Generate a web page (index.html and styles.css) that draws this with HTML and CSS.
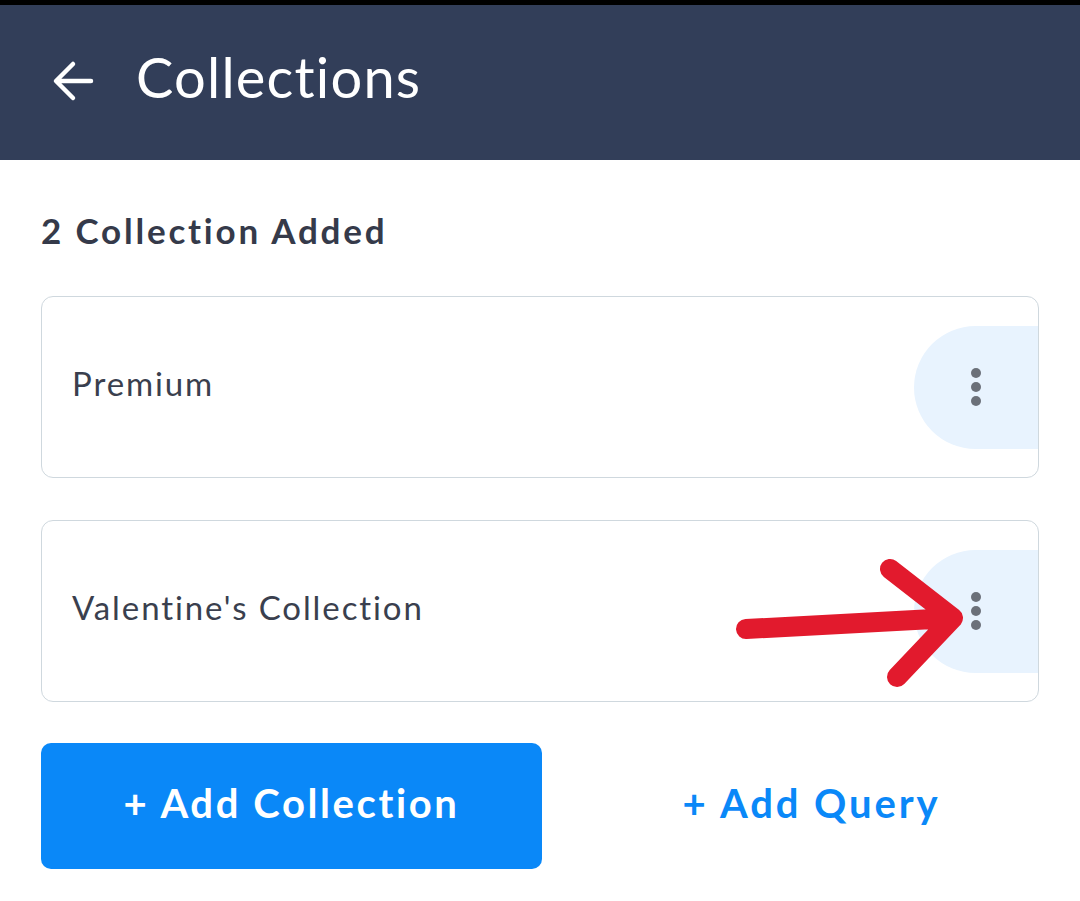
FILE: index.html
```html
<!DOCTYPE html>
<html lang="en">
<head>
    <meta charset="UTF-8">
    <meta name="viewport" content="width=device-width, initial-scale=1.0">
    <link rel="stylesheet" href="styles.css">
</head>
<body>

    <div class="topbar">
        <button class="back" aria-label="Back">
            <svg width="44" height="44" viewBox="0 0 44 44">
                <path d="M40 22H6M22 5L5 22l17 17" fill="none" stroke="#fff" stroke-width="4.5" stroke-linecap="round" stroke-linejoin="round"/>
            </svg>
        </button>
        <h1>Collections</h1>
    </div>

    <div class="content">
        <h2>2 Collection Added</h2>

        <div class="card">
            <span class="name">Premium</span>
            <button class="more" aria-label="More">
                <span></span><span></span><span></span>
            </button>
        </div>

        <div class="card">
            <span class="name">Valentine's Collection</span>
            <button class="more" aria-label="More">
                <span></span><span></span><span></span>
            </button>
        </div>

        <div class="actions">
            <button class="add-collection">+ Add Collection</button>
            <button class="add-query">+ Add Query</button>
        </div>
    </div>

    <!-- annotation arrow drawn over the screenshot -->
    <svg class="marker" width="1080" height="901" viewBox="0 0 1080 901">
        <path d="M746 624L952 613M890 564L953 613L897 672" fill="none" stroke="#e21a2d" stroke-width="20" stroke-linecap="round" stroke-linejoin="round"/>
    </svg>

</body>
</html>
```

FILE: styles.css
```css
body {
    margin: 0;
    padding: 0;
    font-family: Lato, "Open Sans", sans-serif;
    background-color: #fff;
    color: #353a4a;
    position: relative;
    min-height: 901px;
    border-top: 5px solid #000;
    box-sizing: border-box;
}
button {
    font-family: inherit;
    border: none;
    background: none;
    padding: 0;
    cursor: pointer;
}
.topbar {
    height: 155px;
    background-color: #323e59;
    display: flex;
    align-items: center;
    padding-left: 51px;
}
.back {
    width: 44px;
    height: 44px;
    display: flex;
    margin-top: -4px;
}
.topbar h1 {
    margin: -12px 0 0 41px;
    font-size: 56px;
    font-weight: 400;
    color: #fff;
    letter-spacing: 1.2px;
}
.content {
    padding: 0 41px;
}
.content h2 {
    margin: 0;
    padding: 48px 0 44px;
    font-size: 35px;
    font-weight: 700;
    line-height: 44px;
    letter-spacing: 2.8px;
    color: #353a4a;
}
.card {
    height: 180px;
    border: 1px solid #cfd8de;
    border-radius: 12px;
    display: flex;
    align-items: center;
    justify-content: space-between;
    margin-bottom: 42px;
    overflow: hidden;
}
.card + .card {
    margin-bottom: 41px;
}
.card .name {
    padding-left: 30px;
    margin-top: -9px;
    font-size: 33px;
    letter-spacing: 1.9px;
    color: #3a3f4e;
}
.more {
    width: 124px;
    height: 123px;
    background-color: #e8f3fe;
    border-radius: 62px 0 0 62px;
    display: flex;
    flex-direction: column;
    align-items: center;
    justify-content: center;
    gap: 4px;
}
.more span {
    width: 10px;
    height: 10px;
    border-radius: 50%;
    background-color: #6b7079;
}
.actions {
    display: flex;
    gap: 42px;
}
.add-collection {
    width: 501px;
    height: 126px;
    padding-bottom: 6px;
    background-color: #0a88f8;
    border-radius: 10px;
    color: #fff;
    font-size: 40px;
    font-weight: 700;
    letter-spacing: 2.6px;
}
.add-query {
    flex: 1;
    height: 126px;
    padding-bottom: 6px;
    color: #0a88f8;
    font-size: 40px;
    font-weight: 700;
    letter-spacing: 2.9px;
}
.marker {
    position: absolute;
    top: 0;
    left: 0;
    pointer-events: none;
}
```
